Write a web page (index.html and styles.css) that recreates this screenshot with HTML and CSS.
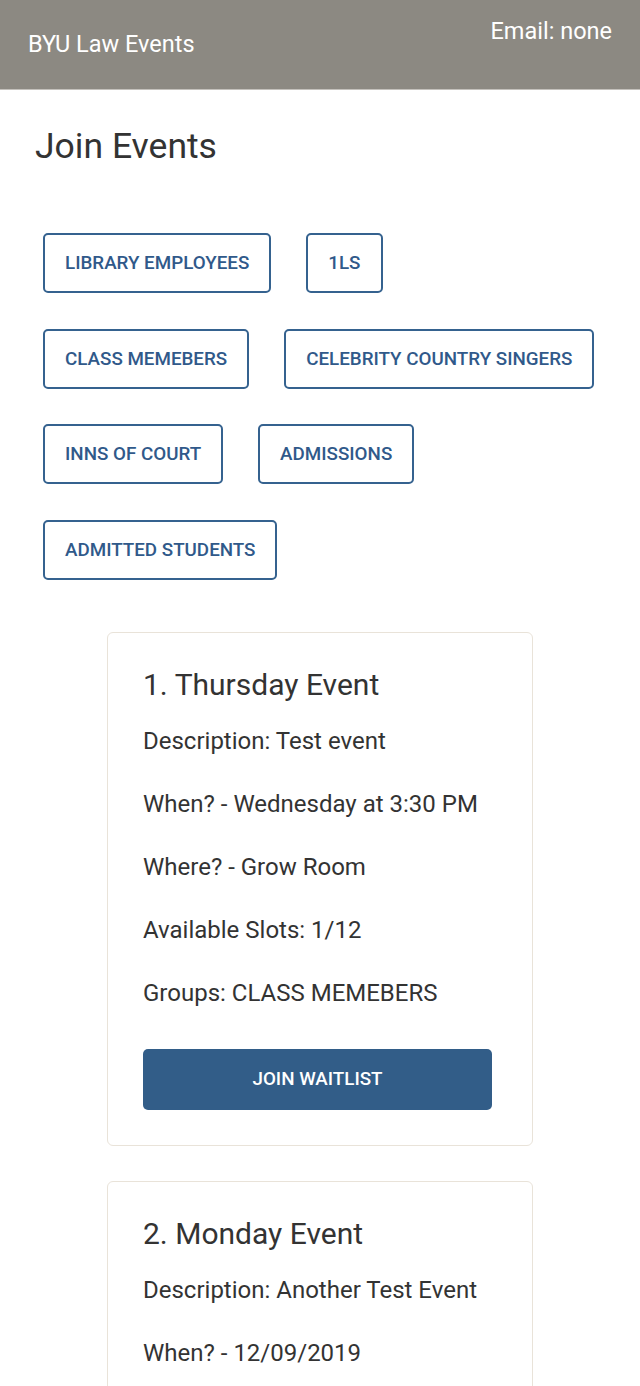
FILE: index.html
```html
<!DOCTYPE html>
<html>
<head>
<meta charset="utf-8">
<link rel="stylesheet" href="styles.css">
</head>
<body>
<header class="topbar">
  <div class="brand">BYU Law Events</div>
  <div class="email">Email: none</div>
</header>
<main class="main">
  <h1 class="title">Join Events</h1>
  <div class="groups">
    <button class="group-btn">Library Employees</button>
    <button class="group-btn">1LS</button>
    <button class="group-btn">Class Memebers</button>
    <button class="group-btn">Celebrity Country Singers</button>
    <button class="group-btn">Inns of Court</button>
    <button class="group-btn">Admissions</button>
    <button class="group-btn">Admitted Students</button>
  </div>
  <div class="cards">
    <section class="card">
      <h2 class="card-title">1. Thursday Event</h2>
      <p class="line">Description: Test event</p>
      <p class="line">When? - Wednesday at 3:30 PM</p>
      <p class="line">Where? - Grow Room</p>
      <p class="line">Available Slots: 1/12</p>
      <p class="line">Groups: CLASS MEMEBERS</p>
      <button class="join-btn">Join Waitlist</button>
    </section>
    <section class="card">
      <h2 class="card-title">2. Monday Event</h2>
      <p class="line">Description: Another Test Event</p>
      <p class="line">When? - 12/09/2019</p>
    </section>
  </div>
</main>
</body>
</html>
```

FILE: styles.css
```css
html, body {
  margin: 0;
  padding: 0;
  background: #fff;
  font-family: Roboto, "Liberation Sans", sans-serif;
  color: #333;
}
.topbar {
  height: 89px;
  background: #8c8982;
  border-bottom: 1px solid #c4c1bc;
  display: flex;
  justify-content: space-between;
  align-items: flex-start;
  padding: 0 28px;
  color: #fff;
}
.brand {
  font-size: 23.5px;
  line-height: 28px;
  margin-top: 30px;
}
.email {
  font-size: 23.5px;
  line-height: 28px;
  margin-top: 17px;
}
.title {
  margin: 0;
  padding: 36px 0 0 35px;
  font-size: 35.5px;
  font-weight: 400;
  line-height: 40px;
  color: #333;
}
.groups {
  display: flex;
  flex-wrap: wrap;
  column-gap: 35px;
  row-gap: 35.5px;
  padding: 67px 40px 0 43px;
}
.group-btn {
  height: 60px;
  padding: 0 20px;
  background: #fff;
  border: 2px solid #35628f;
  border-radius: 5px;
  color: #30598a;
  font-family: Roboto, "Liberation Sans", sans-serif;
  font-size: 18.8px;
  font-weight: 500;
  text-transform: uppercase;
}
.cards {
  display: flex;
  flex-direction: column;
  align-items: center;
  gap: 35px;
  padding-top: 52px;
}
.card {
  width: 354px;
  border: 1px solid #e9e3d9;
  border-radius: 6px;
  padding: 35px 35px 35px 35px;
}
.card-title {
  margin: 0 0 22px 0;
  font-size: 30px;
  font-weight: 400;
  line-height: 34px;
  color: #333;
}
.line {
  margin: 0 0 29px 0;
  font-size: 24px;
  line-height: 34px;
}
.join-btn {
  display: block;
  width: 349px;
  height: 61px;
  margin-top: 39px;
  background: #325d88;
  border: none;
  border-radius: 5px;
  color: #fff;
  font-family: Roboto, "Liberation Sans", sans-serif;
  font-size: 18.8px;
  font-weight: 500;
  text-transform: uppercase;
}
```
